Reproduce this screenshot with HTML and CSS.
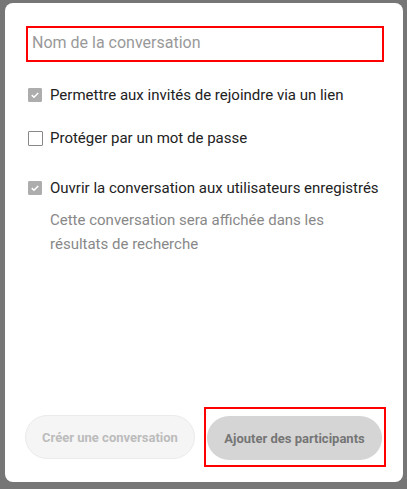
FILE: index.html
```html
<!DOCTYPE html>
<html lang="fr">
<head>
<meta charset="utf-8">
<link rel="stylesheet" href="styles.css">
</head>
<body>
<div class="modal">
  <div class="name-field">
    <input class="name-input" type="text" placeholder="Nom de la conversation">
  </div>
  <div class="options">
    <label class="option opt-1">
      <span class="box checked"><svg viewBox="0 0 14 14" width="14" height="14"><path d="M3.2 7.2 L5.8 9.6 L10.8 4.6" fill="none" stroke="#fff" stroke-width="1.8"/></svg></span>
      <span class="label">Permettre aux invités de rejoindre via un lien</span>
    </label>
    <label class="option opt-2">
      <span class="box"></span>
      <span class="label">Protéger par un mot de passe</span>
    </label>
    <label class="option opt-3">
      <span class="box checked"><svg viewBox="0 0 14 14" width="14" height="14"><path d="M3.2 7.2 L5.8 9.6 L10.8 4.6" fill="none" stroke="#fff" stroke-width="1.8"/></svg></span>
      <span class="label">Ouvrir la conversation aux utilisateurs enregistrés</span>
    </label>
    <p class="hint">Cette conversation sera affichée dans les résultats de recherche</p>
  </div>
  <div class="actions">
    <button class="btn btn-create" type="button">Créer une conversation</button>
    <div class="highlight">
      <button class="btn btn-add" type="button">Ajouter des participants</button>
    </div>
  </div>
</div>
</body>
</html>
```

FILE: styles.css
```css
* { box-sizing: border-box; }
html, body { margin: 0; padding: 0; }
body {
  background: #767676;
  width: 407px;
  height: 489px;
  overflow: hidden;
  font-family: Roboto, "Liberation Sans", sans-serif;
  padding: 3px 4px 7px 5px;
}
.modal {
  width: 398px;
  height: 479px;
  background: #fff;
  border-radius: 8px;
  padding: 23px 0 0 21px;
  display: flex;
  flex-direction: column;
}
.name-field {
  width: 358px;
  height: 36px;
  border: 2px solid #f00;
  display: flex;
  align-items: center;
}
.name-input {
  border: none;
  outline: none;
  width: 100%;
  height: 100%;
  padding: 0 0 4px 4px;
  font-family: Roboto, "Liberation Sans", sans-serif;
  font-size: 16px;
  color: #222;
  background: transparent;
}
.name-input::placeholder { color: #999; }
.options {
  display: flex;
  flex-direction: column;
  padding-left: 2px;
}
.option {
  display: flex;
  align-items: center;
  gap: 7px;
  height: 24px;
  font-size: 15px;
  color: #222;
}
.opt-1 { margin-top: 21px; }
.opt-2 { margin-top: 19px; }
.opt-3 { margin-top: 26px; }
.box {
  width: 15px;
  height: 15px;
  flex: none;
  border: 1px solid #888;
  border-radius: 1px;
  background: #fff;
  display: flex;
  align-items: center;
  justify-content: center;
}
.box.checked {
  width: 14px;
  height: 14px;
  margin-right: 1px;
  border-color: #adadad;
  background: #adadad;
}
.box svg { display: block; }
.hint {
  margin: 8px 0 0 22px;
  width: 300px;
  font-size: 15px;
  line-height: 24px;
  color: #888;
}
.actions {
  margin-top: auto;
  margin-bottom: 15px;
  display: flex;
  align-items: center;
  padding-left: 0;
}
.btn {
  height: 44px;
  border-radius: 22px;
  font-family: Roboto, "Liberation Sans", sans-serif;
  font-weight: bold;
  font-size: 13px;
  padding: 0;
  cursor: pointer;
}
.btn-create {
  width: 170px;
  margin-left: -1px;
  background: #f5f5f5;
  border: 1px solid #ebebeb;
  color: #bcbcbc;
}
.highlight {
  margin-left: 9px;
  border: 2px solid #f00;
  padding: 7px 2px 5px 1px;
}
.btn-add {
  width: 175px;
  background: #d5d5d5;
  border: none;
  color: #757575;
}
```
